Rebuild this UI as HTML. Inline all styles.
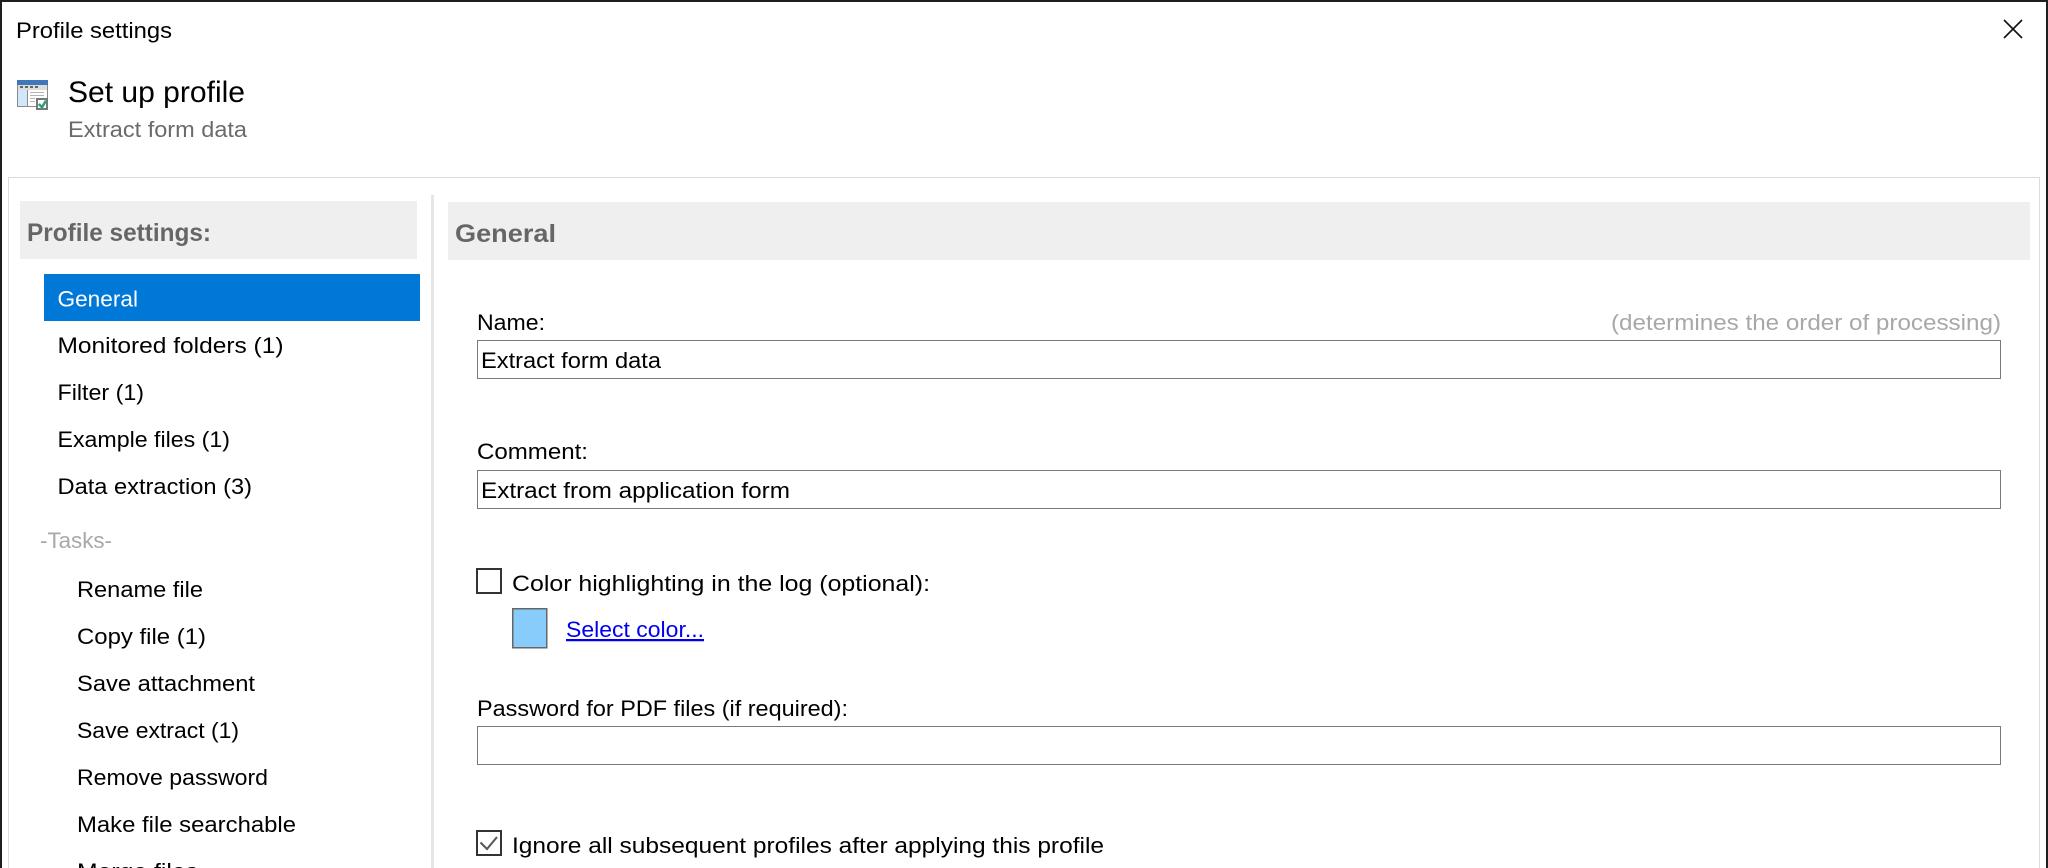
<!DOCTYPE html>
<html lang="en">
<head>
<meta charset="utf-8">
<title>Profile settings</title>
<style>
html,body{margin:0;padding:0;background:#fff;width:2048px;height:868px;overflow:hidden}
svg{display:block}
text{font-family:"Liberation Sans",sans-serif;font-size:22.5px;fill:#000}
.g{fill:#a8a8a8}
.h{font-weight:bold;font-size:25px;fill:#666}
</style>
</head>
<body>
<svg width="2048" height="868" viewBox="0 0 2048 868" xmlns="http://www.w3.org/2000/svg">
<rect width="2048" height="868" fill="#1f1f1c"/>
<rect x="2" y="2" width="2044" height="866" fill="#fff"/>
<rect x="8.5" y="177.5" width="2031" height="700" fill="#fff" stroke="#dcdcdc"/>

<text x="16" y="38" textLength="156" lengthAdjust="spacingAndGlyphs">Profile settings</text>
<path d="M2004 20L2022 38M2022 20L2004 38" stroke="#111" stroke-width="1.6" fill="none"/>

<!-- header icon -->
<rect x="17.500" y="80.500" width="30" height="26" fill="#fff" stroke="#8a8a8a"/>
<rect x="17" y="80" width="31" height="5" fill="#3f78b8"/>
<rect x="18" y="85" width="29" height="5" fill="#dcdcdc"/>
<path d="M20 86h3v2h-3zM25 86h3v2h-3zM30 86h3v2h-3zM35 86h3v2h-3z" fill="#666"/>
<rect x="18" y="90" width="9" height="16" fill="#cfe8fb"/>
<path d="M27.500 90v16" stroke="#8a8a8a"/>
<path d="M30 92.500h14M30 95.500h14M30 98.500h5M30 101.500h5" stroke="#b5b5b5"/>
<rect x="37" y="99" width="10" height="10" fill="#fff" stroke="#777" stroke-width="2"/>
<path d="M38.800 104l3.200 3.200 4-6.500" stroke="#2f9e73" stroke-width="2.500" fill="none"/>

<text x="68" y="102" style="font-size:30px" textLength="177" lengthAdjust="spacingAndGlyphs">Set up profile</text>
<text x="68" y="137" style="fill:#6b6b6b" textLength="179" lengthAdjust="spacingAndGlyphs">Extract form data</text>

<!-- left column -->
<rect x="20" y="201" width="397" height="58" fill="#efefef"/>
<text x="27" y="241" class="h" textLength="184" lengthAdjust="spacingAndGlyphs">Profile settings:</text>
<rect x="44" y="274" width="376" height="47" fill="#0078d7"/>
<text x="57.500" y="306.500" style="fill:#fff" textLength="80.500" lengthAdjust="spacingAndGlyphs">General</text>
<text x="57.500" y="353" textLength="226" lengthAdjust="spacingAndGlyphs">Monitored folders (1)</text>
<text x="57.500" y="400" textLength="86.500" lengthAdjust="spacingAndGlyphs">Filter (1)</text>
<text x="57.500" y="447" textLength="172.500" lengthAdjust="spacingAndGlyphs">Example files (1)</text>
<text x="57.500" y="494" textLength="194.500" lengthAdjust="spacingAndGlyphs">Data extraction (3)</text>
<text x="40" y="548" class="g" textLength="72" lengthAdjust="spacingAndGlyphs">-Tasks-</text>
<text x="77" y="597" textLength="126" lengthAdjust="spacingAndGlyphs">Rename file</text>
<text x="77" y="644" textLength="129" lengthAdjust="spacingAndGlyphs">Copy file (1)</text>
<text x="77" y="691" textLength="178" lengthAdjust="spacingAndGlyphs">Save attachment</text>
<text x="77" y="738" textLength="162" lengthAdjust="spacingAndGlyphs">Save extract (1)</text>
<text x="77" y="785" textLength="191" lengthAdjust="spacingAndGlyphs">Remove password</text>
<text x="77" y="832" textLength="219" lengthAdjust="spacingAndGlyphs">Make file searchable</text>
<text x="77" y="879" textLength="121" lengthAdjust="spacingAndGlyphs">Merge files</text>

<rect x="431" y="195" width="3" height="673" fill="#e6e6e6"/>

<!-- right column -->
<rect x="448" y="202" width="1582" height="58" fill="#efefef"/>
<text x="455" y="242" class="h" textLength="101" lengthAdjust="spacingAndGlyphs">General</text>

<text x="477" y="330" textLength="68" lengthAdjust="spacingAndGlyphs">Name:</text>
<text x="1611" y="330" class="g" textLength="390" lengthAdjust="spacingAndGlyphs">(determines the order of processing)</text>
<rect x="477.500" y="340.500" width="1523" height="38" fill="#fff" stroke="#7a7a7a"/>
<text x="481" y="368" textLength="180" lengthAdjust="spacingAndGlyphs">Extract form data</text>

<text x="477" y="459" textLength="111" lengthAdjust="spacingAndGlyphs">Comment:</text>
<rect x="477.500" y="470.500" width="1523" height="38" fill="#fff" stroke="#7a7a7a"/>
<text x="481" y="498" textLength="309" lengthAdjust="spacingAndGlyphs">Extract from application form</text>

<rect x="477" y="569" width="24" height="24" fill="#fff" stroke="#333" stroke-width="2"/>
<text x="512" y="591" textLength="418" lengthAdjust="spacingAndGlyphs">Color highlighting in the log (optional):</text>
<rect x="512.750" y="608.750" width="34" height="39" fill="#88ccfb" stroke="#666" stroke-width="1.500"/>
<text x="566" y="637" style="fill:#0000ee" textLength="138" lengthAdjust="spacingAndGlyphs" text-decoration="underline">Select color...</text>

<text x="477" y="716" textLength="371" lengthAdjust="spacingAndGlyphs">Password for PDF files (if required):</text>
<rect x="477.500" y="726.500" width="1523" height="38" fill="#fff" stroke="#7a7a7a"/>

<rect x="477" y="831" width="24" height="24" fill="#fff" stroke="#333" stroke-width="2"/>
<path d="M480.500 842.500l6.500 6.500 10-12" stroke="#555" stroke-width="2" fill="none"/>
<text x="512" y="853" textLength="592" lengthAdjust="spacingAndGlyphs">Ignore all subsequent profiles after applying this profile</text>
</svg>
</body>
</html>
